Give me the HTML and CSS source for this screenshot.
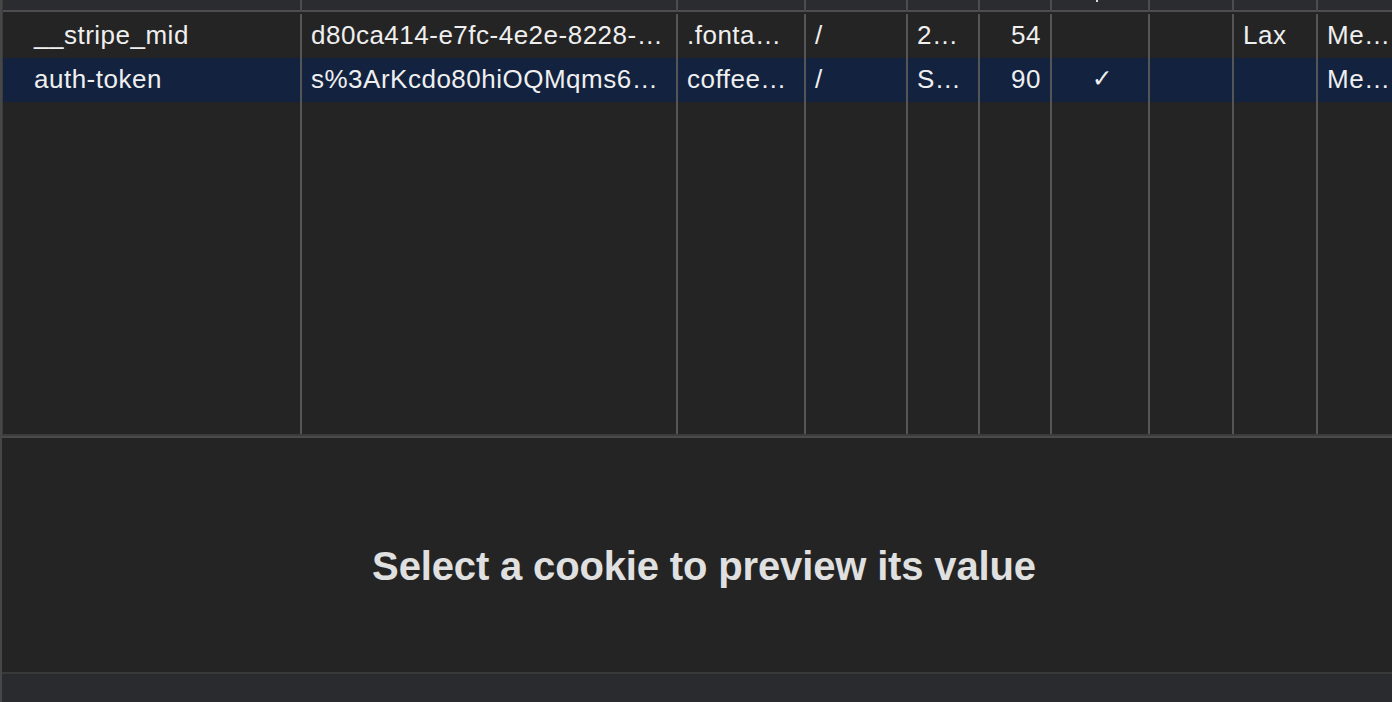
FILE: index.html
```html
<!DOCTYPE html>
<html lang="en">
<head>
<meta charset="utf-8">
<title>Cookies</title>
<link rel="stylesheet" href="styles.css">
</head>
<body>
<div class="inspector">
  <div class="grid-area">
    <div class="row header">
      <div class="cell"></div><div class="cell"></div><div class="cell"></div><div class="cell"></div><div class="cell"></div>
      <div class="cell"></div><div class="cell"><span class="hdr-mark"></span></div><div class="cell"></div><div class="cell"></div><div class="cell"></div>
    </div>
    <div class="body">
      <div class="row">
        <div class="cell name">__stripe_mid</div>
        <div class="cell">d80ca414-e7fc-4e2e-8228-…</div>
        <div class="cell">.fonta…</div>
        <div class="cell">/</div>
        <div class="cell">2…</div>
        <div class="cell num">54</div>
        <div class="cell center"></div>
        <div class="cell center"></div>
        <div class="cell">Lax</div>
        <div class="cell">Me…</div>
      </div>
      <div class="row selected">
        <div class="cell name">auth-token</div>
        <div class="cell">s%3ArKcdo80hiOQMqms6…</div>
        <div class="cell">coffee…</div>
        <div class="cell">/</div>
        <div class="cell">S…</div>
        <div class="cell num">90</div>
        <div class="cell center check">✓</div>
        <div class="cell center"></div>
        <div class="cell"></div>
        <div class="cell">Me…</div>
      </div>
      <div class="row filler">
        <div class="cell"></div><div class="cell"></div><div class="cell"></div><div class="cell"></div><div class="cell"></div>
        <div class="cell"></div><div class="cell"></div><div class="cell"></div><div class="cell"></div><div class="cell"></div>
      </div>
    </div>
  </div>
  <div class="preview">
    <p class="preview-msg">Select a cookie to preview its value</p>
  </div>
  <div class="statusbar"></div>
</div>
</body>
</html>
```

FILE: styles.css
```css
html, body {
  margin: 0;
  padding: 0;
  background: #242424;
  overflow: hidden;
}

.inspector {
  box-sizing: border-box;
  width: 1392px;
  height: 702px;
  display: flex;
  flex-direction: column;
  border-left: 2px solid #474747;
  overflow: hidden;
  font-family: "Liberation Sans", Arial, Helvetica, sans-serif;
  color: #efefef;
}

.grid-area {
  box-sizing: border-box;
  height: 436px;
  flex: none;
  display: flex;
  flex-direction: column;
  border-left: 1px solid #3c3c3c;
  border-bottom: 2px solid #3b3b3b;
  background: #242424;
}

.row {
  display: grid;
  grid-template-columns: 299px 376px 128px 102px 72px 72px 98px 84px 84px 160px;
  width: 1475px;
}

.header {
  height: 10px;
  flex: none;
  background: #2b2c30;
  border-bottom: 2px solid #4d4d4d;
}

.header .cell {
  border-right-color: #4c4c4c;
  position: relative;
}

.hdr-mark {
  position: absolute;
  left: 44px;
  top: 0;
  width: 2px;
  height: 2px;
  background: #d8d8d8;
}

.body {
  flex: 1;
  display: flex;
  flex-direction: column;
  padding-top: 2px;
}

.cell {
  box-sizing: border-box;
  border-right: 2px solid #555555;
  padding: 0 9px 2px 9px;
  font-size: 26px;
  line-height: 42px;
  letter-spacing: 0.5px;
  white-space: nowrap;
  overflow: hidden;
  text-overflow: ellipsis;
}

.body .row {
  height: 44px;
  flex: none;
}

.body .row.filler {
  flex: 1;
  height: auto;
}

.name {
  padding-left: 31px;
}

.num {
  text-align: right;
}

.center {
  text-align: center;
}

.check {
  font-family: "DejaVu Sans", sans-serif;
  font-weight: bold;
  font-size: 25px;
  padding-right: 4px;
}

.selected {
  background: #12223f;
}

.preview {
  box-sizing: border-box;
  height: 238px;
  flex: none;
  display: flex;
  align-items: center;
  justify-content: center;
  border-top: 2px solid #4a4a4a;
  border-bottom: 2px solid #393939;
  padding: 22px 0 0 14px;
  background: #242424;
}

.preview-msg {
  margin: 0;
  font-size: 40px;
  font-weight: bold;
  color: #e0e0e0;
  letter-spacing: -0.15px;
}

.statusbar {
  flex: 1;
  background: #2a2b2f;
}
```
